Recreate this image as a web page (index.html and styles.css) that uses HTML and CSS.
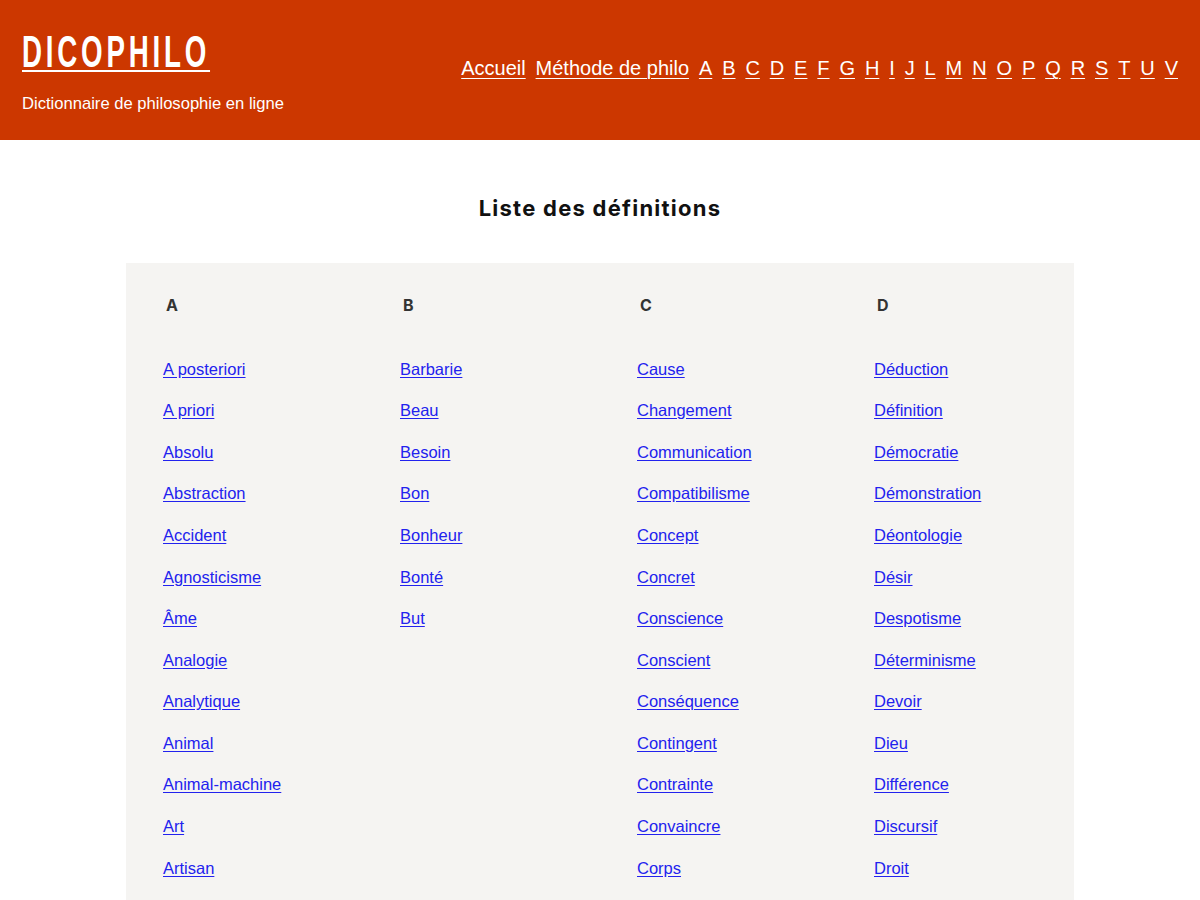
FILE: index.html
```html
<!DOCTYPE html>
<html lang="fr">
<head>
<meta charset="utf-8">
<title>Dicophilo - Liste des définitions</title>
<link rel="stylesheet" href="styles.css">
</head>
<body>
<header class="site-header">
  <div class="brand">
    <a class="brand-title" href="#">DICOPHILO</a>
    <p class="brand-tagline">Dictionnaire de philosophie en ligne</p>
  </div>
  <nav class="main-nav">
    <a href="#">Accueil</a>
    <a href="#">Méthode de philo</a>
    <a href="#">A</a><a href="#">B</a><a href="#">C</a><a href="#">D</a><a href="#">E</a><a href="#">F</a><a href="#">G</a><a href="#">H</a><a href="#">I</a><a href="#">J</a><a href="#">L</a><a href="#">M</a><a href="#">N</a><a href="#">O</a><a href="#">P</a><a href="#">Q</a><a href="#">R</a><a href="#">S</a><a href="#">T</a><a href="#">U</a><a href="#">V</a>
  </nav>
</header>
<main class="content">
  <h1 class="page-title">Liste des définitions</h1>
  <section class="index-box">
    <div class="letter-col">
      <h2 class="letter">A</h2>
      <ul class="terms">
        <li><a href="#">A posteriori</a></li>
        <li><a href="#">A priori</a></li>
        <li><a href="#">Absolu</a></li>
        <li><a href="#">Abstraction</a></li>
        <li><a href="#">Accident</a></li>
        <li><a href="#">Agnosticisme</a></li>
        <li><a href="#">Âme</a></li>
        <li><a href="#">Analogie</a></li>
        <li><a href="#">Analytique</a></li>
        <li><a href="#">Animal</a></li>
        <li><a href="#">Animal-machine</a></li>
        <li><a href="#">Art</a></li>
        <li><a href="#">Artisan</a></li>
      </ul>
    </div>
    <div class="letter-col">
      <h2 class="letter">B</h2>
      <ul class="terms">
        <li><a href="#">Barbarie</a></li>
        <li><a href="#">Beau</a></li>
        <li><a href="#">Besoin</a></li>
        <li><a href="#">Bon</a></li>
        <li><a href="#">Bonheur</a></li>
        <li><a href="#">Bonté</a></li>
        <li><a href="#">But</a></li>
      </ul>
    </div>
    <div class="letter-col">
      <h2 class="letter">C</h2>
      <ul class="terms">
        <li><a href="#">Cause</a></li>
        <li><a href="#">Changement</a></li>
        <li><a href="#">Communication</a></li>
        <li><a href="#">Compatibilisme</a></li>
        <li><a href="#">Concept</a></li>
        <li><a href="#">Concret</a></li>
        <li><a href="#">Conscience</a></li>
        <li><a href="#">Conscient</a></li>
        <li><a href="#">Conséquence</a></li>
        <li><a href="#">Contingent</a></li>
        <li><a href="#">Contrainte</a></li>
        <li><a href="#">Convaincre</a></li>
        <li><a href="#">Corps</a></li>
      </ul>
    </div>
    <div class="letter-col">
      <h2 class="letter">D</h2>
      <ul class="terms">
        <li><a href="#">Déduction</a></li>
        <li><a href="#">Définition</a></li>
        <li><a href="#">Démocratie</a></li>
        <li><a href="#">Démonstration</a></li>
        <li><a href="#">Déontologie</a></li>
        <li><a href="#">Désir</a></li>
        <li><a href="#">Despotisme</a></li>
        <li><a href="#">Déterminisme</a></li>
        <li><a href="#">Devoir</a></li>
        <li><a href="#">Dieu</a></li>
        <li><a href="#">Différence</a></li>
        <li><a href="#">Discursif</a></li>
        <li><a href="#">Droit</a></li>
      </ul>
    </div>
  </section>
</main>
</body>
</html>
```

FILE: styles.css
```css
html, body {
  margin: 0;
  padding: 0;
  background: #ffffff;
}

body {
  font-family: "Liberation Sans", Arial, sans-serif;
  color: #222;
}

.site-header {
  background: #cc3700;
  height: 140px;
  box-sizing: border-box;
  padding: 0 22px;
  display: flex;
  justify-content: space-between;
  align-items: flex-start;
}

.brand {
  padding-top: 29px;
}

.brand-title {
  display: inline-block;
  color: #ffffff;
  font-family: "Liberation Sans", Arial, sans-serif;
  font-weight: 700;
  font-size: 44px;
  line-height: 46px;
  letter-spacing: 6px;
  text-decoration: underline;
  text-decoration-thickness: 2px;
  text-underline-offset: 3px;
  transform: scaleX(0.63);
  transform-origin: left center;
  white-space: nowrap;
  width: 297px;
}

.brand-tagline {
  margin: 19px 0 0;
  color: #ffffff;
  font-size: 16.6px;
  line-height: 20px;
}

.main-nav {
  display: flex;
  gap: 9.9px;
  padding-top: 56px;
}

.main-nav a {
  color: #ffffff;
  font-size: 20px;
  line-height: 24px;
  text-decoration: underline;
  text-underline-offset: 3px;
  text-decoration-thickness: 1px;
}

.content {
  padding-top: 53px;
}

.page-title {
  margin: 0;
  text-align: center;
  font-family: Inter, "Liberation Sans", sans-serif;
  font-weight: 700;
  font-size: 22px;
  line-height: 30px;
  letter-spacing: 1.25px;
  color: #111;
}

.index-box {
  width: 948px;
  margin: 40px auto 0;
  box-sizing: border-box;
  background: #f5f4f2;
  padding: 32px 0 40px 37px;
  display: grid;
  grid-template-columns: repeat(4, 237px);
  align-items: start;
}

.letter {
  margin: 0 0 33px 3px;
  font-family: Inter, "Liberation Sans", sans-serif;
  font-weight: 700;
  font-size: 16px;
  line-height: 20px;
  letter-spacing: 0.5px;
  color: #333;
}

.terms {
  list-style: none;
  margin: 0;
  padding: 0;
}

.terms li {
  padding: 10.79px 0;
  line-height: 20px;
  font-size: 16.5px;
}

.terms a {
  color: #2222ee;
  text-decoration: underline;
  text-underline-offset: 2px;
}
```
